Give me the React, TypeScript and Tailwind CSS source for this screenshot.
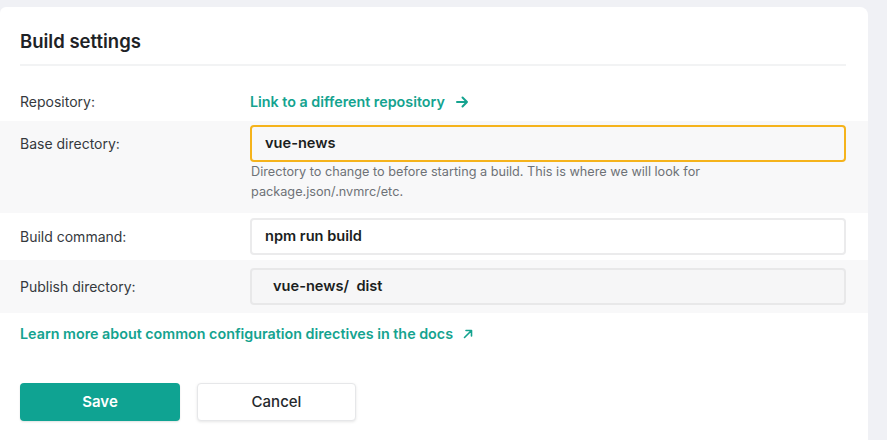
import React, { useState } from 'react';

const font = { fontFamily: 'Inter, "Liberation Sans", sans-serif' };

const ArrowRight = () => (
    <svg width="14" height="14" viewBox="0 0 14 14" fill="none" stroke="currentColor" strokeWidth="2" strokeLinecap="round" strokeLinejoin="round">
        <path d="M2 7h10M7.5 2.5 12 7l-4.5 4.5" />
    </svg>
);

const ArrowUpRight = () => (
    <svg width="12" height="12" viewBox="0 0 12 12" fill="none" stroke="currentColor" strokeWidth="1.6" strokeLinecap="round" strokeLinejoin="round">
        <path d="M2.5 9.5 9.5 2.5M4 2.5h5.5V8" />
    </svg>
);

const App: React.FC = () => {
    const [baseDir, setBaseDir] = useState('vue-news');
    const [command, setCommand] = useState('npm run build');

    return (
        <div className="w-[887px] h-[440px] overflow-hidden bg-[#f0f1f5] pt-[7px]" style={font}>
            <div className="w-[868px] h-[460px] bg-white rounded-tr-lg rounded-tl-md">
                <div className="px-5">
                    <h2 className="h-[57px] pt-[23px] text-[18.5px] leading-[22px] font-semibold text-[#1e2226]">Build settings</h2>
                    <div className="h-[2px] bg-[#f2f3f4] mr-[2px]" />
                </div>

                <div className="flex items-center h-[55px] px-5 pt-[16px]">
                    <span className="w-[230px] text-[14px] leading-[20px] text-[#35393d]">Repository:</span>
                    <a className="flex items-center gap-[10px] text-[14.3px] leading-[20px] font-semibold text-[#14a38f]">
                        Link to a different repository <ArrowRight />
                    </a>
                </div>

                <div className="flex h-[92px] bg-[#f8f8f9] px-5 pt-[4px]">
                    <span className="w-[230px] pt-[9px] text-[14px] leading-[20px] text-[#35393d]">Base directory:</span>
                    <div className="flex-1 mr-[2px]">
                        <div className="h-[37px] flex items-center border-2 border-[#f5b31c] rounded-[4px] pl-[13px]">
                            <input
                                value={baseDir}
                                onChange={(e) => setBaseDir(e.target.value)}
                                className="w-full bg-transparent outline-none text-[14.6px] font-semibold text-[#1b1e21]"
                            />
                        </div>
                        <p className="pl-[1px] text-[12.7px] leading-[20px] text-[#6e7277]">
                            Directory to change to before starting a build. This is where we will look for<br />
                            package.json/.nvmrc/etc.
                        </p>
                    </div>
                </div>

                <div className="flex items-center h-[47px] px-5">
                    <span className="w-[230px] text-[14px] leading-[20px] text-[#35393d]">Build command:</span>
                    <div className="flex-1 mr-[2px] h-[37px] flex items-center border-2 border-[#ebebec] rounded-[4px] bg-white pl-[13px]">
                        <input
                            value={command}
                            onChange={(e) => setCommand(e.target.value)}
                            className="w-full bg-transparent outline-none text-[14.6px] font-semibold text-[#1b1e21]"
                        />
                    </div>
                </div>

                <div className="flex items-center h-[53px] bg-[#f8f8f9] px-5">
                    <span className="w-[230px] text-[14px] leading-[20px] text-[#35393d]">Publish directory:</span>
                    <div className="flex-1 mr-[2px] h-[37px] flex items-center border-2 border-[#e8e8e9] rounded-[4px] bg-[#f6f6f7] pl-[21px] text-[14.6px] font-semibold text-[#1b1e21] whitespace-pre">
                        vue-news/  dist
                    </div>
                </div>

                <div className="px-5 pt-[11px]">
                    <a className="flex items-center gap-[9px] text-[14.3px] leading-[20px] font-semibold text-[#14a38f]">
                        Learn more about common configuration directives in the docs <ArrowUpRight />
                    </a>
                </div>

                <div className="flex gap-[17px] px-5 pt-[39px]">
                    <button className="w-[160px] h-[38px] rounded-[4px] bg-[#0fa392] text-white text-[15px] font-semibold shadow-[0_1px_2px_rgba(0,0,0,0.12)]">
                        Save
                    </button>
                    <button className="w-[159px] h-[38px] rounded-[4px] bg-white border border-[#e6e7e9] text-[#24282c] text-[15px] font-medium shadow-[0_1px_3px_rgba(0,0,0,0.1)]">
                        Cancel
                    </button>
                </div>
            </div>
        </div>
    );
};

export default App;
